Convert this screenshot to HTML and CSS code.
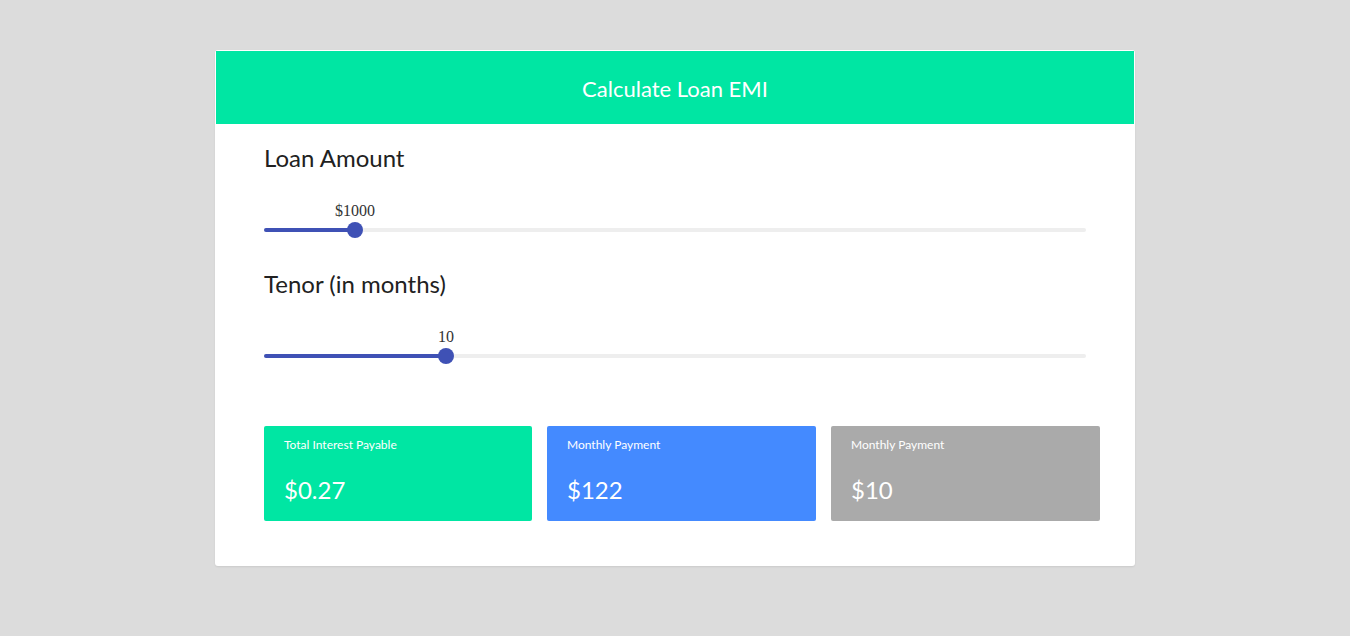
FILE: index.html
```html
<!DOCTYPE html>
<html lang="en">
<head>
<meta charset="utf-8">
<title>Calculate Loan EMI</title>
<link rel="stylesheet" href="styles.css">
</head>
<body>
<main class="card">
  <header class="card-header">Calculate Loan EMI</header>
  <section class="card-body">
    <div class="field">
      <h2 class="field-label">Loan Amount</h2>
      <div class="slider">
        <div class="slider-fill" style="width: 11.07%"></div>
        <div class="slider-thumb" style="left: 11.07%">
          <span class="slider-value">$1000</span>
        </div>
      </div>
    </div>
    <div class="field field-second">
      <h2 class="field-label">Tenor (in months)</h2>
      <div class="slider">
        <div class="slider-fill" style="width: 22.14%"></div>
        <div class="slider-thumb" style="left: 22.14%">
          <span class="slider-value">10</span>
        </div>
      </div>
    </div>
    <div class="results">
      <div class="result result-green">
        <div class="result-label">Total Interest Payable</div>
        <div class="result-value">$0.27</div>
      </div>
      <div class="result result-blue">
        <div class="result-label">Monthly Payment</div>
        <div class="result-value">$122</div>
      </div>
      <div class="result result-gray">
        <div class="result-label">Monthly Payment</div>
        <div class="result-value">$10</div>
      </div>
    </div>
  </section>
</main>
</body>
</html>
```

FILE: styles.css
```css
html, body {
  margin: 0;
  padding: 0;
}

body {
  background: #dcdcdc;
  font-family: Lato, "Open Sans", sans-serif;
  padding-top: 50px;
  height: 636px;
  box-sizing: border-box;
}

.card {
  display: block;
  width: 920px;
  margin: 0 auto;
  background: #ffffff;
  padding: 1px;
  box-sizing: border-box;
  border-radius: 3px;
  box-shadow: 0 1px 2px rgba(0, 0, 0, 0.08);
}

.card-header {
  height: 73px;
  background: #00e6a3;
  color: #ffffff;
  font-size: 22px;
  line-height: 76px;
  text-align: center;
}

.card-body {
  padding: 20px 48px 44px 48px;
}

.field-label {
  margin: 0;
  font-weight: 400;
  font-size: 24px;
  line-height: 28px;
  color: #212121;
}

.slider {
  position: relative;
  width: 822px;
  height: 4px;
  margin-top: 56px;
  background: #eeeeee;
  border-radius: 2px;
}

.slider-fill {
  height: 100%;
  background: #3f51b5;
  border-radius: 2px;
}

.slider-thumb {
  position: absolute;
  top: 50%;
  width: 16px;
  height: 16px;
  margin-left: -8px;
  margin-top: -8px;
  border-radius: 50%;
  background: #3f51b5;
}

.slider-value {
  position: absolute;
  left: 50%;
  bottom: 18px;
  transform: translateX(-50%);
  font-family: "Liberation Serif", "Times New Roman", serif;
  font-size: 16px;
  line-height: 18px;
  color: #333333;
  white-space: nowrap;
}

.field-second {
  margin-top: 38px;
}

.results {
  display: grid;
  grid-template-columns: 268px 269px 269px;
  column-gap: 15px;
  width: 836px;
  margin-top: 68px;
}

.result {
  height: 95px;
  box-sizing: border-box;
  padding: 12px 20px 0 20px;
  border-radius: 2px;
  color: #ffffff;
}

.result-green { background: #00e6a3; }
.result-blue { background: #448aff; }
.result-gray { background: #aaaaaa; }

.result-label {
  font-size: 12px;
  line-height: 14px;
}

.result-value {
  margin-top: 23px;
  font-size: 24px;
  line-height: 29px;
}
```
